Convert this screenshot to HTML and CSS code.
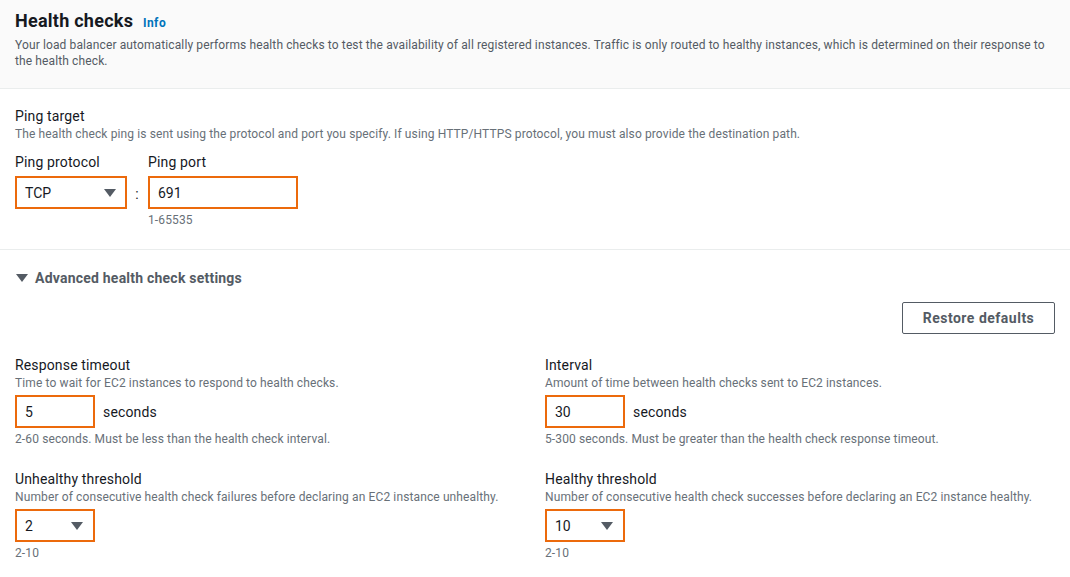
FILE: index.html
```html
<!DOCTYPE html>
<html>
<head>
<meta charset="utf-8">
<link rel="stylesheet" href="styles.css">
</head>
<body>
<div class="panel">
  <header class="head">
    <h2 class="title">Health checks <a class="info">Info</a></h2>
    <p class="head-desc">Your load balancer automatically performs health checks to test the availability of all registered instances. Traffic is only routed to healthy instances, which is determined on their response to the health check.</p>
  </header>

  <section class="section ping">
    <div class="label">Ping target</div>
    <div class="desc">The health check ping is sent using the protocol and port you specify. If using HTTP/HTTPS protocol, you must also provide the destination path.</div>
    <div class="ping-row">
      <div class="field">
        <div class="label">Ping protocol</div>
        <div class="select w-proto"><span>TCP</span><span class="caret"></span></div>
      </div>
      <div class="colon">:</div>
      <div class="field">
        <div class="label">Ping port</div>
        <div class="input w-port">691</div>
        <div class="hint">1-65535</div>
      </div>
    </div>
  </section>

  <section class="section adv">
    <div class="adv-toggle"><span class="caret big"></span>Advanced health check settings</div>
    <div class="btn-row"><button class="btn">Restore defaults</button></div>
    <div class="grid">
      <div class="field">
        <div class="label">Response timeout</div>
        <div class="desc">Time to wait for EC2 instances to respond to health checks.</div>
        <div class="with-unit"><div class="input w-small">5</div><span class="unit">seconds</span></div>
        <div class="hint">2-60 seconds. Must be less than the health check interval.</div>
      </div>
      <div class="field">
        <div class="label">Interval</div>
        <div class="desc">Amount of time between health checks sent to EC2 instances.</div>
        <div class="with-unit"><div class="input w-small">30</div><span class="unit">seconds</span></div>
        <div class="hint">5-300 seconds. Must be greater than the health check response timeout.</div>
      </div>
      <div class="field">
        <div class="label">Unhealthy threshold</div>
        <div class="desc">Number of consecutive health check failures before declaring an EC2 instance unhealthy.</div>
        <div class="select w-small"><span>2</span><span class="caret"></span></div>
        <div class="hint">2-10</div>
      </div>
      <div class="field">
        <div class="label">Healthy threshold</div>
        <div class="desc">Number of consecutive health check successes before declaring an EC2 instance healthy.</div>
        <div class="select w-small"><span>10</span><span class="caret"></span></div>
        <div class="hint">2-10</div>
      </div>
    </div>
  </section>
</div>
</body>
</html>
```

FILE: styles.css
```css
* { box-sizing: border-box; }
html, body { margin: 0; padding: 0; background: #fff; }
body {
  font-family: Roboto, "Liberation Sans", Arial, sans-serif;
  color: #16191f;
  width: 1070px;
  height: 577px;
  overflow: hidden;
}
.head {
  background: #fafafa;
  border-bottom: 1px solid #eaeded;
  padding: 9px 15px 0 15px;
  height: 89px;
}
.title {
  margin: 0;
  font-size: 18px;
  font-weight: 700;
  line-height: 24px;
  letter-spacing: 0.25px;
  color: #16191f;
}
.info {
  font-size: 12px;
  color: #0073bb;
  font-weight: 700;
  margin-left: 5px;
  letter-spacing: 0.5px;
}
.head-desc {
  margin: 2px 0 0 0;
  font-size: 12px;
  line-height: 16px;
  letter-spacing: 0.12px;
  color: #545b64;
}
.section { padding: 0 15px; }
.ping {
  border-bottom: 1px solid #eaeded;
  padding-top: 17px;
  height: 161px;
}
.label {
  font-size: 14px;
  line-height: 20px;
  letter-spacing: 0.15px;
  color: #16191f;
}
.desc {
  font-size: 12px;
  line-height: 16px;
  letter-spacing: 0.12px;
  color: #687078;
}
.hint {
  font-size: 12px;
  line-height: 16px;
  letter-spacing: 0.12px;
  color: #687078;
  margin-top: 3px;
}
.ping-row {
  display: flex;
  align-items: flex-start;
  margin-top: 10px;
}
.ping-row .label { margin-bottom: 4px; }
.colon {
  width: 21px;
  text-align: center;
  font-size: 14px;
  margin-top: 34px;
  padding-right: 1px;
  color: #16191f;
}
.select, .input {
  height: 33px;
  border: 2px solid #ec6a0c;
  font-size: 14px;
  display: flex;
  align-items: center;
  padding: 0 8px;
  color: #16191f;
}
.select { justify-content: space-between; padding-right: 9px; }
.w-proto { width: 112px; }
.w-port { width: 150px; }
.w-small { width: 80px; }
.w-small.select { padding-right: 10px; }
.caret {
  width: 0; height: 0;
  border-left: 6px solid transparent;
  border-right: 6px solid transparent;
  border-top: 8px solid #545b64;
}
.adv-toggle {
  margin-top: 19px;
  font-size: 14px;
  font-weight: 700;
  letter-spacing: 0.22px;
  color: #545b64;
  display: flex;
  align-items: center;
  line-height: 18px;
}
.caret.big { margin-right: 7px; margin-left: 1px; }
.btn-row {
  display: flex;
  justify-content: flex-end;
  margin-top: 15px;
}
.btn {
  width: 153px;
  height: 32px;
  border: 1px solid #545b64;
  border-radius: 2px;
  background: #fff;
  color: #545b64;
  font-family: inherit;
  font-size: 14px;
  font-weight: 700;
  letter-spacing: 0.5px;
  padding: 0;
}
.grid {
  display: grid;
  grid-template-columns: 530px 1fr;
  row-gap: 22px;
  margin-top: 21px;
}
.grid .desc { margin-top: 0; margin-bottom: 4px; }
.with-unit {
  display: flex;
  align-items: center;
}
.unit { font-size: 14px; margin-left: 8px; letter-spacing: 0.15px; }
```
